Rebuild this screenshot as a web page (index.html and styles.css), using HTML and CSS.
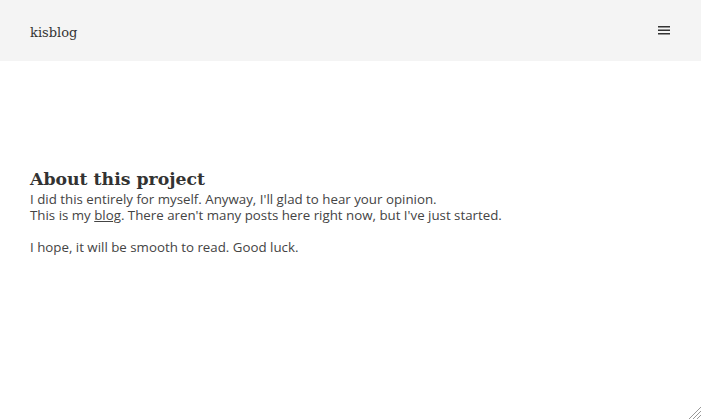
FILE: index.html
```html
<!DOCTYPE html>
<html lang="en">
<head>
<meta charset="utf-8">
<title>kisblog</title>
<link rel="stylesheet" href="styles.css">
</head>
<body>
<header class="topbar">
  <a class="logo" href="#">kisblog</a>
  <button class="menu" aria-label="Menu">
    <svg width="12" height="9" viewBox="0 0 12 9"><rect x="0" y="0" width="12" height="1.5" fill="#333"/><rect x="0" y="3.5" width="12" height="1.5" fill="#333"/><rect x="0" y="7" width="12" height="1.5" fill="#333"/></svg>
  </button>
</header>
<main class="about">
  <h1 class="title">About this project</h1>
  <p class="text">I did this entirely for myself. Anyway, I'll glad to hear your opinion.<br>This is my <a href="#">blog</a>. There aren't many posts here right now, but I've just started.</p>
  <p class="text">I hope, it will be smooth to read. Good luck.</p>
</main>
<div class="grip">
  <svg width="14" height="14" viewBox="0 0 14 14"><path d="M14 2 L2 14 M14 6 L6 14 M14 10 L10 14" stroke="#999" stroke-width="1"/></svg>
</div>
</body>
</html>
```
FILE: styles.css
```css
html, body { margin: 0; padding: 0; background: #fff; }
body { font-family: "Open Sans", "DejaVu Sans", sans-serif; color: #444; height: 419px; overflow: hidden; position: relative; }
.topbar { height: 61px; background: #f4f4f4; display: flex; align-items: center; justify-content: space-between; padding: 0 30px; box-sizing: border-box; }
.logo { font-family: "DejaVu Serif", "Liberation Serif", serif; font-size: 13px; color: #333; text-decoration: none; margin-top: 3px; }
.menu { border: 0; background: none; padding: 0; display: flex; margin-right: 1px; }
.about { padding: 107px 30px 0; }
.title { font-family: "DejaVu Serif", serif; font-size: 17.3px; font-weight: bold; color: #333; margin: 0; line-height: 23px; }
.text { font-size: 13.3px; line-height: 16px; margin: 0 0 16px; }
.text a { color: #444; }
.grip { position: absolute; right: 0; bottom: 0; width: 14px; height: 14px; }
.grip svg { display: block; }
```
